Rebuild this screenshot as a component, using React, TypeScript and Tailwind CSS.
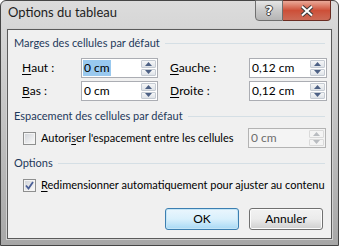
import React from "react";

const ui = "font-['Segoe_UI',Lato,sans-serif]";

function Arrow({ up, disabled }: { up?: boolean; disabled?: boolean }) {
  return (
    <svg width="7" height="4" viewBox="0 0 7 4">
      <path d={up ? "M0 4L3.5 0L7 4Z" : "M0 0L3.5 4L7 0Z"} fill={disabled ? "#b9bcc0" : "#4d6185"} />
    </svg>
  );
}

function SpinBox({
  value,
  width,
  selected,
  disabled,
}: {
  value: string;
  width: string;
  selected?: boolean;
  disabled?: boolean;
}) {
  const half = disabled
    ? "border-[#dadada] bg-[#f4f4f4]"
    : "border-[#c5cbd3] bg-gradient-to-b from-[#f5f6f7] to-[#dfe3e8]";
  return (
    <div
      className={`flex h-[20px] ${width} border ${
        disabled ? "border-[#b3b3b3] bg-[#f4f4f4]" : "border-[#abadb3] bg-white"
      }`}
    >
      <div className="flex flex-1 items-center pl-[1px]">
        <span
          className={`px-[1px] text-[12px] leading-[16px] ${
            selected ? "bg-[#99c9ef] text-black" : disabled ? "text-[#6d6d6d]" : "text-black"
          }`}
        >
          {value}
        </span>
      </div>
      <div className="flex w-[16px] flex-col gap-px py-px pr-px">
        <div className={`flex flex-1 items-center justify-center rounded-[1px] border ${half}`}>
          <Arrow up disabled={disabled} />
        </div>
        <div className={`flex flex-1 items-center justify-center rounded-[1px] border ${half}`}>
          <Arrow disabled={disabled} />
        </div>
      </div>
    </div>
  );
}

function Check({ checked }: { checked?: boolean }) {
  return (
    <div className="flex h-[13px] w-[13px] shrink-0 items-center justify-center border border-[#8e8f8f] bg-white">
      <div className="flex h-[11px] w-[11px] items-center justify-center border border-[#f4f4f4] bg-gradient-to-br from-[#d3d6db] to-[#f8f8f8]">
        {checked && (
          <svg width="9" height="9" viewBox="0 0 9 9">
            <path d="M1 4.5L3.5 7.5L8 1" fill="none" stroke="#4a5f97" strokeWidth="1.8" />
          </svg>
        )}
      </div>
    </div>
  );
}

function GroupHeader({ label }: { label: string }) {
  return (
    <div className="flex items-center gap-[5px] pl-[6px] pr-[6px]">
      <span className="leading-[16px] text-[#1e395b]">{label}</span>
      <div className="h-px flex-1 bg-[#d5dfe5]" />
    </div>
  );
}

export default function App() {
  return (
    <div
      className={`${ui} flex h-[246px] w-[339px] flex-col rounded-t-[6px] border border-[#454545] bg-gradient-to-b from-[#dcdcdc] via-[#c2c2c2] to-[#a7a7a7] px-[6px] pb-[6px] text-[11px]`}
    >
      <div className="flex h-[28px] items-start justify-between">
        <span className="pl-[1px] pt-[3px] text-[13px] leading-[16px] text-[#1e1e1e]">Options du tableau</span>
        <div className="-mt-px mr-[1px] flex h-[21px]">
          <div className="flex w-[28px] items-center justify-center rounded-bl-[4px] border border-[#6f6f6f] bg-gradient-to-b from-[#e6e6e6] via-[#c9c9c9] to-[#b5b5b5]">
            <span className="font-['DejaVu_Sans',sans-serif] text-[13px] font-bold leading-none text-white [text-shadow:0_0_1px_#333,1px_0_0_#444,-1px_0_0_#444,0_1px_0_#444,0_-1px_0_#444]">
              ?
            </span>
          </div>
          <div className="flex w-[48px] items-center justify-center rounded-br-[4px] border border-l-0 border-[#6b2c22] bg-gradient-to-b from-[#e9a999] via-[#cd4f38] to-[#cc6a56]">
            <svg width="14" height="12" viewBox="0 0 14 12">
              <path d="M2 1.5L12 10.5M12 1.5L2 10.5" stroke="#3b3b3b" strokeWidth="4" />
              <path d="M2 1.5L12 10.5M12 1.5L2 10.5" stroke="#ffffff" strokeWidth="2" />
            </svg>
          </div>
        </div>
      </div>
      <div className="flex flex-1 flex-col border border-[#5a5a5a] bg-[#f0f0f0] text-black shadow-[0_0_0_1px_#d2d2d2]">
        <div className="mt-[5px]">
          <GroupHeader label="Marges des cellules par défaut" />
        </div>
        <div className="mt-[7px] grid grid-cols-[59px_77px_91px_78px] gap-y-[3px] pl-[14px] text-[12px]">
          <div className="flex items-center">
            <span className="underline underline-offset-2">H</span>aut :
          </div>
          <SpinBox value="0 cm" width="w-[77px]" selected />
          <div className="flex items-center pl-[12px]">
            <span className="underline underline-offset-2">G</span>auche :
          </div>
          <SpinBox value="0,12 cm" width="w-[78px]" />
          <div className="flex items-center">
            <span className="underline underline-offset-2">B</span>as :
          </div>
          <SpinBox value="0 cm" width="w-[77px]" />
          <div className="flex items-center pl-[12px]">
            <span className="underline underline-offset-2">D</span>roite :
          </div>
          <SpinBox value="0,12 cm" width="w-[78px]" />
        </div>
        <div className="mt-[7px]">
          <GroupHeader label="Espacement des cellules par défaut" />
        </div>
        <div className="mt-[4px] flex h-[20px] items-center pl-[15px] pr-[5px]">
          <Check />
          <span className="ml-[5px] flex-1 whitespace-nowrap">
            Autori<span className="underline underline-offset-2">s</span>er l'espacement entre les cellules
          </span>
          <SpinBox value="0 cm" width="w-[78px]" disabled />
        </div>
        <div className="mt-[7px]">
          <GroupHeader label="Options" />
        </div>
        <div className="mt-[6px] flex h-[16px] items-center pl-[15px]">
          <Check checked />
          <span className="ml-[5px] whitespace-nowrap">
            <span className="underline underline-offset-2">R</span>edimensionner automatiquement pour ajuster au contenu
          </span>
        </div>
        <div className="mt-[15px] flex justify-end gap-[10px] pr-[8px] text-[12px]">
          <button className="h-[22px] w-[74px] rounded-[3px] border border-[#3c7fb1] bg-gradient-to-b from-[#eaf6fd] via-[#d9f0fc] to-[#a7d9f5] text-black shadow-[inset_0_0_0_1px_#c4e5f6]">
            OK
          </button>
          <button className="h-[22px] w-[74px] rounded-[3px] border border-[#707070] bg-gradient-to-b from-[#f2f2f2] via-[#ebebeb] to-[#cfcfcf] text-black shadow-[inset_0_0_0_1px_#fcfcfc]">
            Annuler
          </button>
        </div>
      </div>
    </div>
  );
}
